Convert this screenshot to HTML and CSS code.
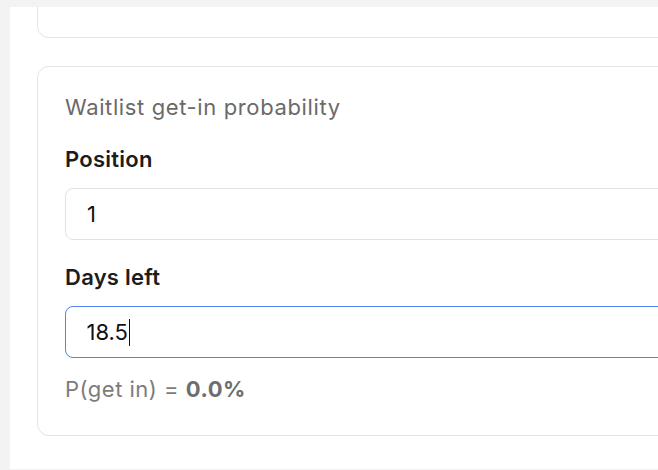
FILE: index.html
```html
<!DOCTYPE html>
<html lang="en">
<head>
<meta charset="utf-8">
<title>Waitlist get-in probability</title>
<link rel="stylesheet" href="styles.css">
</head>
<body>
<div class="panel">
  <div class="card card-prev"></div>
  <section class="card card-main">
    <h2 class="card-title">Waitlist get-in probability</h2>
    <div class="field-group">
      <label class="field-label">Position</label>
      <div class="field"><span class="field-value">1</span></div>
    </div>
    <div class="field-group">
      <label class="field-label">Days left</label>
      <div class="field field-focused"><span class="field-value">18.5</span><span class="caret"></span></div>
    </div>
    <p class="result">P(get in) = <strong class="result-value">0.0%</strong></p>
  </section>
</div>
</body>
</html>
```

FILE: styles.css
```css
html, body {
  margin: 0;
  padding: 0;
}
body {
  background: #f3f3f3;
  font-family: Inter, "Noto Sans", "Liberation Sans", sans-serif;
  overflow: hidden;
  width: 658px;
  height: 470px;
}
.panel {
  margin: 7px 0 0 10px;
  width: 820px;
  height: 462px;
  background: #ffffff;
  overflow: hidden;
  padding: 0 0 0 27px;
  box-sizing: border-box;
}
.card {
  border: 1px solid #e4e4e4;
  border-radius: 12px;
  background: #ffffff;
  box-sizing: border-box;
}
.card-prev {
  height: 61px;
  margin-top: -30px;
}
.card-main {
  margin-top: 28px;
  padding: 27px 27px 32px 27px;
  height: 370px;
}
.card-title {
  margin: 0;
  font-size: 22px;
  line-height: 26px;
  font-weight: 400;
  letter-spacing: 0.62px;
  color: #6a6a6a;
}
.field-group {
  display: flex;
  flex-direction: column;
}
.card-title + .field-group {
  margin-top: 26px;
}
.field-group + .field-group {
  margin-top: 24px;
}
.field-label {
  font-size: 22px;
  line-height: 26px;
  font-weight: 600;
  letter-spacing: 0.25px;
  color: #1c1c1c;
  margin-bottom: 16px;
}
.field {
  height: 52px;
  border: 1px solid #e2e2e2;
  border-radius: 8px;
  box-sizing: border-box;
  display: flex;
  align-items: center;
  padding-left: 21px;
  font-size: 22px;
  line-height: 26px;
  color: #111111;
}
.field-focused {
  border: 1.5px solid #5585ea;
  padding-left: 20.5px;
}
.caret {
  display: inline-block;
  width: 1.5px;
  height: 27px;
  background: #111111;
  margin-left: 1px;
}
.result {
  margin: 18px 0 0 0;
  font-size: 22px;
  line-height: 26px;
  letter-spacing: 0.5px;
  color: #7c7c7c;
}
.result-value {
  font-weight: 700;
  color: #6e6e6e;
}
```
